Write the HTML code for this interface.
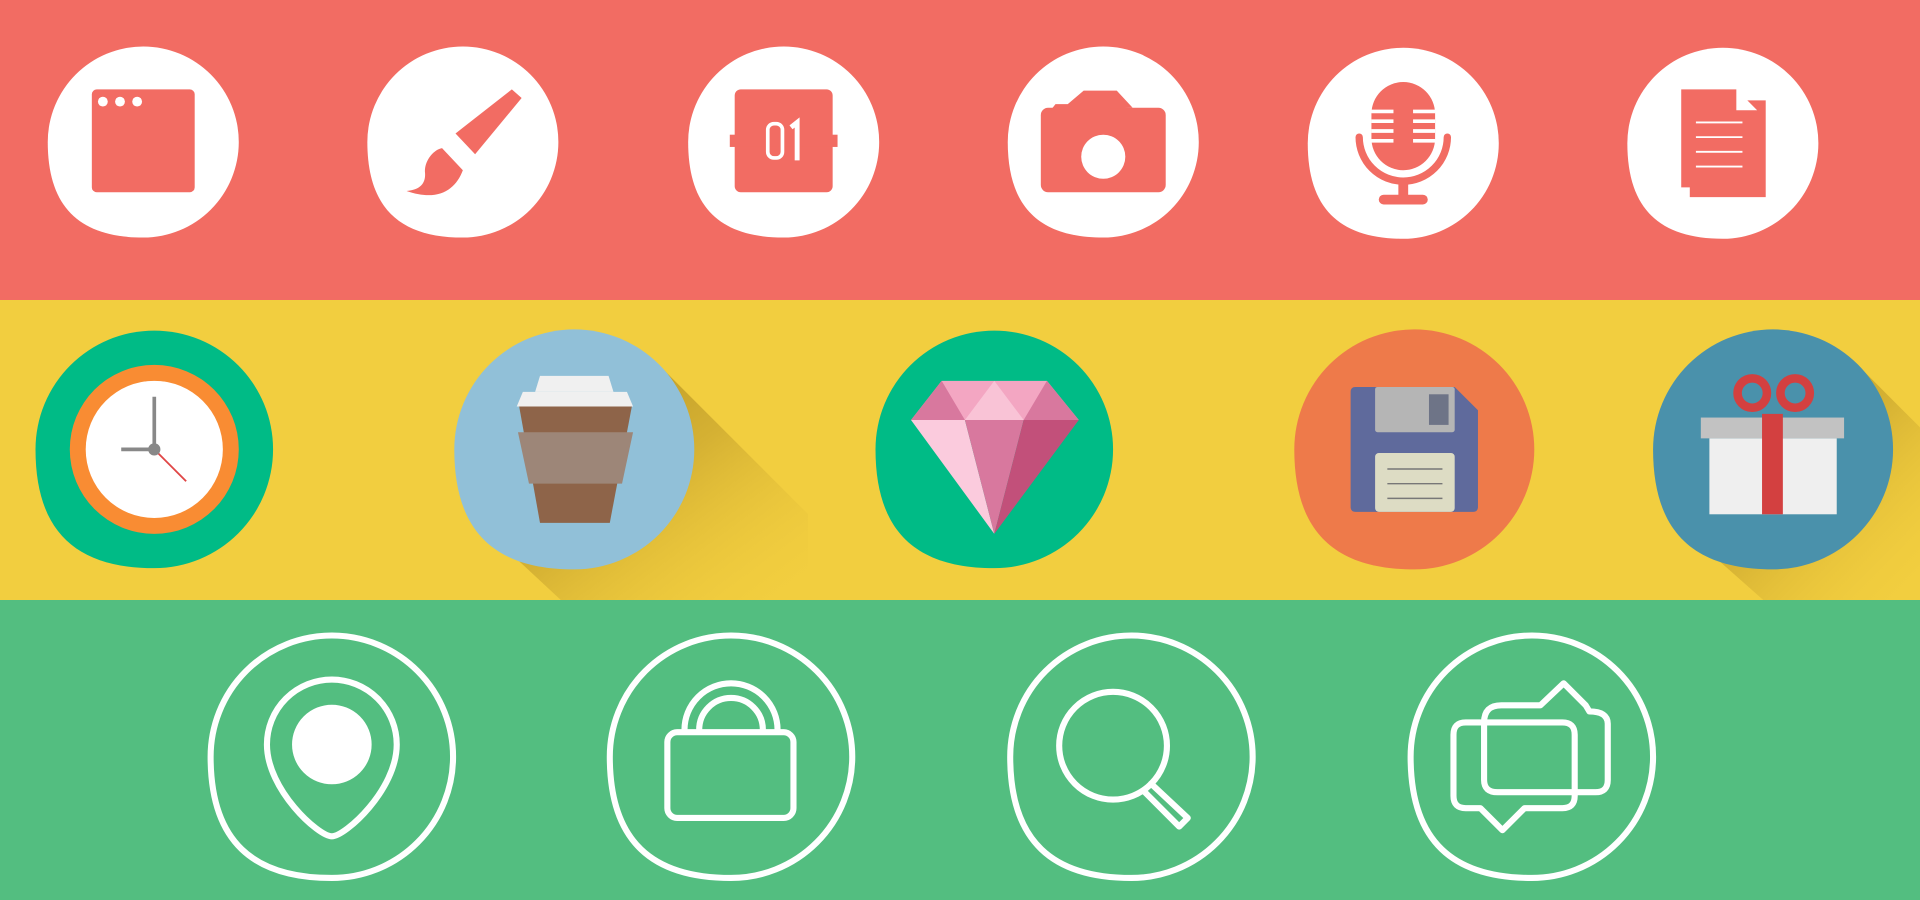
<!DOCTYPE html>
<html><head><meta charset="utf-8"><style>html,body{margin:0;padding:0;width:1920px;height:900px;overflow:hidden}svg{display:block}</style></head>
<body>
<svg width="1920" height="900" viewBox="0 0 1568 735" xmlns="http://www.w3.org/2000/svg">
<defs>
<path id="b" d="M-1,0 A1 1 0 0 1 0,-1 A1 1 0 0 1 1,0 A1 1 0 0 1 0,1 C-0.65,1 -1,0.7 -1,0 Z"/>
<linearGradient id="sh" x1="0" y1="0" x2="1" y2="1"><stop offset="0" stop-color="#a8861a" stop-opacity="1"/><stop offset="0.5" stop-color="#c9a52e" stop-opacity="0.7"/><stop offset="1" stop-color="#f2ce3f" stop-opacity="0"/></linearGradient>
<clipPath id="yc"><rect x="0" y="245" width="1568" height="245"/></clipPath>
</defs>
<rect x="0" y="0" width="1568" height="245" fill="#F26C63"/>
<rect x="0" y="245" width="1568" height="245" fill="#F2CE3F"/>
<rect x="0" y="490" width="1568" height="245" fill="#53BE80"/>

<!-- row 1 -->
<g fill="#fff">
<use href="#b" transform="translate(117,116) scale(78)"/>
<use href="#b" transform="translate(378,116) scale(78)"/>
<use href="#b" transform="translate(640,116) scale(78)"/>
<use href="#b" transform="translate(901,116) scale(78)"/>
<use href="#b" transform="translate(1146,117) scale(78)"/>
<use href="#b" transform="translate(1407,117) scale(78)"/>
</g>
<g fill="#F26C63">
<rect x="75" y="73" width="84" height="84" rx="4"/>
<circle cx="84" cy="83" r="4" fill="#fff"/><circle cx="98" cy="83" r="4" fill="#fff"/><circle cx="112" cy="83" r="4" fill="#fff"/>
<polygon points="372,109 418,73 426,80 388,126"/>
<path d="M332,156 C345,155 348,148 347,140 C347,130 355,122 361,121 L378,139 C372,155 358,165 332,156Z"/>
<rect x="600" y="73" width="80" height="84" rx="5"/>
<rect x="596" y="110" width="88" height="10"/>
<rect x="627" y="101" width="12" height="28" rx="5" fill="none" stroke="#fff" stroke-width="3"/>
<path d="M646,104 L651,100 L651,131" fill="none" stroke="#fff" stroke-width="4"/>
<rect x="850" y="88" width="102" height="69" rx="6"/>
<path d="M858,90 L862,85 L872,85 L885,74 L912,74 L925,88 Z"/>
<circle cx="901" cy="128" r="18" fill="#fff"/>
<rect x="1120" y="67" width="52" height="72" rx="26"/>
<g stroke="#fff" stroke-width="3"><line x1="1120" y1="91" x2="1138" y2="91"/><line x1="1154" y1="91" x2="1172" y2="91"/><line x1="1120" y1="99" x2="1138" y2="99"/><line x1="1154" y1="99" x2="1172" y2="99"/><line x1="1120" y1="107" x2="1138" y2="107"/><line x1="1154" y1="107" x2="1172" y2="107"/><line x1="1120" y1="115" x2="1138" y2="115"/><line x1="1154" y1="115" x2="1172" y2="115"/></g>
<path d="M1110,112 A36 36 0 0 0 1182,112" fill="none" stroke="#F26C63" stroke-width="6" stroke-linecap="round"/>
<rect x="1142" y="146" width="8" height="14"/>
<rect x="1126" y="159" width="40" height="8" rx="4"/>
<path d="M1373,73 L1418,73 L1418,90 L1435,90 L1427,82 L1442,82 L1442,161 L1380,161 L1380,153 L1373,153 Z"/>
<g stroke="#fff" stroke-width="1.5"><line x1="1385" y1="100" x2="1423" y2="100"/><line x1="1385" y1="112" x2="1423" y2="112"/><line x1="1385" y1="124" x2="1423" y2="124"/><line x1="1385" y1="136" x2="1423" y2="136"/></g>
</g>

<!-- row 2 shadows -->
<g clip-path="url(#yc)">
<polygon points="538,298 660,420 660,490 458,490 400,436" fill="url(#sh)"/>
<polygon points="1517,298 1568,349 1568,490 1440,490 1379,436" fill="url(#sh)"/>
</g>
<use href="#b" transform="translate(126,367) scale(97)" fill="#00BB86"/>
<circle cx="126" cy="367" r="69" fill="#F98C33"/>
<circle cx="126" cy="367" r="56" fill="#fff"/>
<line x1="126" y1="367" x2="152" y2="393" stroke="#e04646" stroke-width="1.5"/>
<line x1="126" y1="367" x2="126" y2="324" stroke="#888" stroke-width="3"/>
<line x1="126" y1="367" x2="99" y2="367" stroke="#888" stroke-width="3"/>
<circle cx="126" cy="367" r="5" fill="#888"/>
<use href="#b" transform="translate(469,367) scale(98)" fill="#91C0D8"/>
<polygon points="441,307 497,307 501,320 437,320" fill="#F0F0F0"/>
<polygon points="427,320 512,320 517,332 422,332" fill="#F0F0F0"/>
<polygon points="424,332 516,332 498,427 441,427" fill="#8E6449"/>
<polygon points="423,353 517,353 508,395 432,395" fill="#9D8678"/>
<use href="#b" transform="translate(812,367) scale(97)" fill="#00BB86"/>
<polygon points="769,311 855,311 881,343 744,343" fill="#F3A6C2"/>
<polygon points="744,343 769,311 788,343" fill="#D8789E"/>
<polygon points="788,343 812,311 836,343" fill="#F9C3D6"/>
<polygon points="836,343 855,311 881,343" fill="#D8789E"/>
<polygon points="744,343 788,343 812,436" fill="#FBCBDD"/>
<polygon points="788,343 836,343 812,436" fill="#D8789E"/>
<polygon points="836,343 881,343 812,436" fill="#C2507A"/>
<use href="#b" transform="translate(1155,367) scale(98)" fill="#EE7A4A"/>
<path d="M1107,316 L1188,316 L1207,335 L1207,414 Q1207,418 1203,418 L1107,418 Q1103,418 1103,414 L1103,320 Q1103,316 1107,316Z" fill="#5F6A9C"/>
<rect x="1123" y="316" width="65" height="37" rx="2" fill="#B5B5B5"/>
<rect x="1167" y="322" width="16" height="25" fill="#6E7487"/>
<rect x="1123" y="370" width="65" height="48" rx="3" fill="#DDDCC4"/>
<g stroke="#777" stroke-width="1.2"><line x1="1133" y1="383" x2="1178" y2="383"/><line x1="1133" y1="395" x2="1178" y2="395"/><line x1="1133" y1="407" x2="1178" y2="407"/></g>
<use href="#b" transform="translate(1448,367) scale(98)" fill="#4A91AB"/>
<rect x="1396" y="358" width="104" height="62" fill="#EFEFEF"/>
<rect x="1389" y="341" width="117" height="17" fill="#C2C2C2"/>
<rect x="1439" y="338" width="17" height="82" fill="#D34040"/>
<circle cx="1431" cy="321" r="12" fill="none" stroke="#D34040" stroke-width="7"/>
<circle cx="1466" cy="321" r="12" fill="none" stroke="#D34040" stroke-width="7"/>

<!-- row 3 -->
<g fill="none" stroke="#fff" stroke-width="5" stroke-linejoin="round" stroke-linecap="round">
<use href="#b" transform="translate(271,618) scale(99)" stroke-width="0.05"/>
<use href="#b" transform="translate(597,618) scale(99)" stroke-width="0.05"/>
<use href="#b" transform="translate(924,618) scale(99)" stroke-width="0.05"/>
<use href="#b" transform="translate(1251,618) scale(99)" stroke-width="0.05"/>
<path d="M271,683 C260,683 218,645 218,608 A53 53 0 0 1 324,608 C324,645 282,683 271,683Z"/>
<circle cx="271" cy="608" r="30" fill="#fff"/>
<path d="M559,596 A38 38 0 0 1 635,596"/>
<path d="M571,596 A26 26 0 0 1 623,596"/>
<rect x="545" y="598" width="103" height="70" rx="8"/>
<circle cx="909" cy="609" r="44"/>
<path d="M940,640 L970,668 L963,675 L934,646"/>
<path d="M1298,581 Q1313,581 1313,591 L1313,637 Q1313,647 1303,647 L1223,647 Q1212,647 1212,637 L1212,590 Q1212,576 1226,576 L1258,576 L1277,558 L1295,576 Z"/>
<path d="M1197,590 L1276,590 Q1286,590 1286,600 L1286,650 Q1286,660 1276,660 L1245,660 L1227,678 L1209,660 L1197,660 Q1187,660 1187,650 L1187,600 Q1187,590 1197,590Z"/>
</g>
</svg>
</body></html>
